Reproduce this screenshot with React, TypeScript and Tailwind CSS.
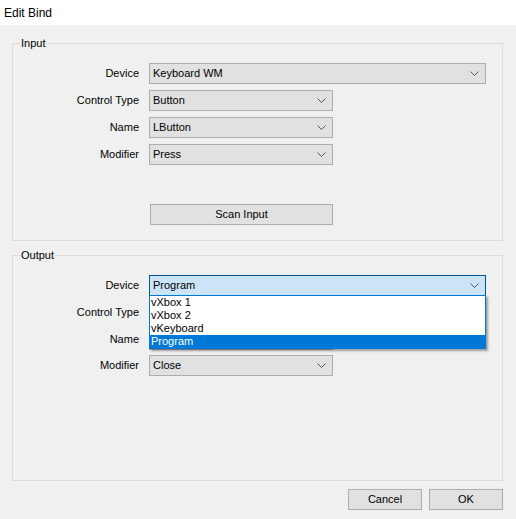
import React from "react";

const font = { fontFamily: '"Liberation Sans", Arial, sans-serif' };

const Chevron = () => (
  <svg width="9" height="5" viewBox="0 0 9 5" className="shrink-0">
    <path d="M0.5 0.5 L4.5 4.5 L8.5 0.5" fill="none" stroke="#555" strokeWidth="1" />
  </svg>
);

const Combo = ({ value, wide, focused }: { value?: string; wide?: boolean; focused?: boolean }) => (
  <div
    className={`flex items-center justify-between h-[21px] pl-[3px] pr-[6px] border text-[11px] text-black ${
      wide ? "w-[337px]" : "w-[184px]"
    } ${focused ? "bg-[#cce4f7] border-[#005499]" : "bg-[#e1e1e1] border-[#adadad]"}`}
  >
    <span>{value}</span>
    <Chevron />
  </div>
);

const Row = ({ label, children }: { label: string; children: React.ReactNode }) => (
  <div className="flex items-center">
    <div className="w-[126px] text-right text-[11px] text-black">{label}</div>
    <div className="ml-[10px]">{children}</div>
  </div>
);

const Group = ({ title, height, children }: { title: string; height: string; children: React.ReactNode }) => (
  <div className={`relative border border-[#dcdcdc] ${height}`}>
    <span className="absolute left-[7px] top-[-7px] px-[1px] bg-[#f0f0f0] text-[11px] leading-[13px] text-black">
      {title}
    </span>
    {children}
  </div>
);

export default function App() {
  return (
    <div className="w-[516px] h-[519px] bg-[#f0f0f0] flex flex-col" style={font}>
      <div className="h-[25px] bg-white flex items-center pl-[4px] text-[12px] text-black">Edit Bind</div>

      <div className="pl-[12px] pr-[13px] pt-[18px] flex flex-col">
        <Group title="Input" height="h-[198px]">
          <div className="flex flex-col gap-[6px] pt-[19px]">
            <Row label="Device">
              <Combo value="Keyboard WM" wide />
            </Row>
            <Row label="Control Type">
              <Combo value="Button" />
            </Row>
            <Row label="Name">
              <Combo value="LButton" />
            </Row>
            <Row label="Modifier">
              <Combo value="Press" />
            </Row>
          </div>
          <button className="ml-[137px] mt-[39px] w-[183px] h-[21px] bg-[#e1e1e1] border border-[#adadad] text-[11px] text-black">
            Scan Input
          </button>
        </Group>

        <div className="mt-[14px]">
          <Group title="Output" height="h-[226px]">
            <div className="flex flex-col gap-[6px] pt-[19px]">
              <Row label="Device">
                <div className="relative">
                  <Combo value="Program" wide focused />
                  <div className="absolute left-0 top-[20px] w-[337px] bg-white border border-[#0078d7] text-[11px] leading-[13px] text-black shadow-[2px_2px_2px_rgba(0,0,0,0.35)] z-10">
                    <div className="pl-[1px]">vXbox 1</div>
                    <div className="pl-[1px]">vXbox 2</div>
                    <div className="pl-[1px]">vKeyboard</div>
                    <div className="pl-[1px] bg-[#0078d7] text-white">Program</div>
                  </div>
                </div>
              </Row>
              <Row label="Control Type">
                <Combo />
              </Row>
              <Row label="Name">
                <Combo />
              </Row>
              <div className="-mt-[1px]">
                <Row label="Modifier">
                  <Combo value="Close" />
                </Row>
              </div>
            </div>
          </Group>
        </div>

        <div className="flex justify-end gap-[7px] mt-[8px]">
          <button className="w-[74px] h-[21px] bg-[#e1e1e1] border border-[#adadad] text-[11px] text-black">Cancel</button>
          <button className="w-[74px] h-[21px] bg-[#e1e1e1] border border-[#adadad] text-[11px] text-black">OK</button>
        </div>
      </div>
    </div>
  );
}
